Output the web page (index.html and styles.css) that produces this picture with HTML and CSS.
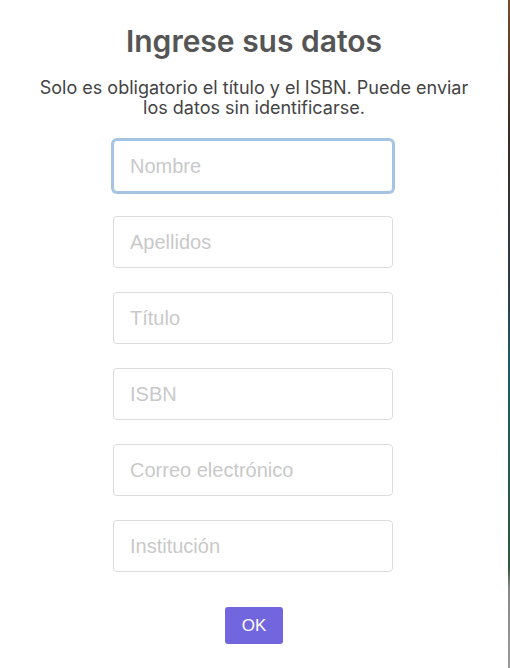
FILE: index.html
```html
<!DOCTYPE html>
<html lang="es">
<head>
<meta charset="utf-8">
<title>Ingrese sus datos</title>
<link rel="stylesheet" href="styles.css">
</head>
<body>
<div class="screen">
  <main class="dialog">
    <h1 class="title">Ingrese sus datos</h1>
    <p class="lead">Solo es obligatorio el título y el ISBN. Puede enviar los datos sin identificarse.</p>
    <form class="form">
      <input class="field is-focused" type="text" placeholder="Nombre">
      <input class="field" type="text" placeholder="Apellidos">
      <input class="field" type="text" placeholder="Título">
      <input class="field" type="text" placeholder="ISBN">
      <input class="field" type="email" placeholder="Correo electrónico">
      <input class="field" type="text" placeholder="Institución">
      <button class="ok" type="button">OK</button>
    </form>
  </main>
  <div class="backdrop"></div>
</div>
</body>
</html>
```
FILE: styles.css
```css
html, body {
  margin: 0;
  padding: 0;
  background: #fff;
}
.screen {
  display: flex;
  width: 510px;
  height: 668px;
  overflow: hidden;
}
.dialog {
  flex: 1;
  background: #fff;
  display: flex;
  flex-direction: column;
  align-items: center;
  padding-top: 22px;
}
.backdrop {
  width: 2px;
  background: linear-gradient(#7a4a2a 0%, #3a2a20 20%, #2a4050 45%, #1f5a6a 55%, #2e5a3a 85%, #888 88%, #999 100%);
}
.title {
  margin: 0;
  font-family: Inter, "Noto Sans", sans-serif;
  font-weight: 600;
  font-size: 30px;
  line-height: 38px;
  color: #555;
}
.lead {
  margin: 18px 0 0;
  width: 450px;
  text-align: center;
  font-family: Inter, "Noto Sans", sans-serif;
  font-size: 18px;
  line-height: 20px;
  color: #444;
}
.form {
  margin-top: 22px;
  display: flex;
  flex-direction: column;
  align-items: center;
  gap: 24px;
}
.field {
  box-sizing: border-box;
  width: 280px;
  height: 52px;
  margin: 0 2px 0 0;
  padding: 0 16px;
  border: 1px solid #dcdcdc;
  border-radius: 4px;
  font-family: "Liberation Sans", Arial, sans-serif;
  font-size: 20px;
  color: #333;
  background: #fff;
  outline: none;
}
.field::placeholder {
  color: #c9c9c9;
}
.field.is-focused {
  border-color: #a6c4e2;
  box-shadow: 0 0 0 2px #a6c4e2;
}
.ok {
  margin-top: 11px;
  width: 58px;
  height: 37px;
  border: 0;
  border-radius: 3px;
  background: #7166dd;
  color: #fff;
  font-family: "Liberation Sans", Arial, sans-serif;
  font-size: 17px;
}
```
